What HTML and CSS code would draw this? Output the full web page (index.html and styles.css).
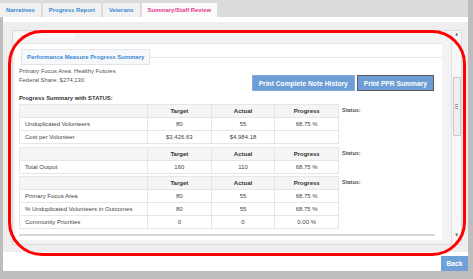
FILE: index.html
```html
<!DOCTYPE html>
<html lang="en">
<head>
  <meta charset="UTF-8">
  <meta name="viewport" content="width=device-width, initial-scale=1.0">
  <title>Summary/Staff Review</title>
  <link rel="stylesheet" href="styles.css">
</head>
<body>
  <div class="frame">
    <div class="tabs">
      <a class="tab" href="#">Narratives</a>
      <a class="tab" href="#">Progress Report</a>
      <a class="tab" href="#">Veterans</a>
      <a class="tab active" href="#">Summary/Staff Review</a>
    </div>

    <div class="panel">
      <div class="scroller">
        <div class="pane">
          <div class="toolbar"></div>
          <div class="sheet">
            <fieldset class="summary">
              <legend>Performance Measure Progress Summary</legend>
              <div class="intro">
                <div class="facts">
                  <div>Primary Focus Area: Healthy Futures</div>
                  <div>Federal Share: $274,130</div>
                </div>
                <div class="actions">
                  <button class="print-btn">Print Complete Note History</button>
                  <button class="print-btn focused">Print PPR Summary</button>
                </div>
              </div>
              <div class="caption">Progress Summary with STATUS:</div>

              <div class="group">
                <table class="grid">
                  <tr><th class="name"></th><th>Target</th><th>Actual</th><th>Progress</th></tr>
                  <tr><td class="name">Unduplicated Volunteers</td><td>80</td><td>55</td><td>68.75 %</td></tr>
                  <tr><td class="name">Cost per Volunteer</td><td>$3,426.63</td><td>$4,984.18</td><td></td></tr>
                </table>
                <span class="status">Status:</span>
              </div>

              <div class="group">
                <table class="grid">
                  <tr><th class="name"></th><th>Target</th><th>Actual</th><th>Progress</th></tr>
                  <tr><td class="name">Total Output</td><td>160</td><td>110</td><td>68.75 %</td></tr>
                </table>
                <span class="status">Status:</span>
              </div>

              <div class="group">
                <table class="grid">
                  <tr><th class="name"></th><th>Target</th><th>Actual</th><th>Progress</th></tr>
                  <tr><td class="name">Primary Focus Area</td><td>80</td><td>55</td><td>68.75 %</td></tr>
                  <tr><td class="name">% Unduplicated Volunteers in Outcomes</td><td>80</td><td>55</td><td>68.75 %</td></tr>
                  <tr><td class="name">Community Priorities</td><td>0</td><td>0</td><td>0.00 %</td></tr>
                </table>
                <span class="status">Status:</span>
              </div>
            </fieldset>
            <div class="hscroll"></div>
          </div>
        </div>
        <div class="vscroll">
          <span class="arrow">&#9650;</span>
          <div class="thumb"><span class="grip"></span></div>
          <span class="arrow down">&#9660;</span>
        </div>
      </div>
    </div>

    <div class="footer">
      <button class="back-btn">Back</button>
    </div>

    <div class="highlight"></div>
  </div>
</body>
</html>
```

FILE: styles.css
```css
* {
  box-sizing: border-box;
}
body {
  margin: 0;
  font-family: "Liberation Sans", Arial, sans-serif;
  background-color: #ffffff;
}
.frame {
  position: relative;
  width: 473px;
  height: 279px;
  border-style: solid;
  border-color: #bdbdbd;
  border-width: 0 5px 8px 3px;
  background-color: #ffffff;
  display: flex;
  flex-direction: column;
}
.tabs {
  height: 17px;
  margin-left: -3px;
  padding-top: 3px;
  background-color: #dbdbdb;
  display: flex;
  gap: 2px;
}
.tab {
  height: 14px;
  line-height: 14px;
  padding: 0 6px;
  background-color: #f1f1f1;
  color: #3688d5;
  font-size: 5.9px;
  font-weight: bold;
  text-decoration: none;
}
.tab.active {
  background-color: #fbfbfb;
  color: #e8358b;
}
.panel {
  margin-top: 5px;
  height: 230px;
  background-color: #eeeeee;
  padding: 8px 6px 7px 9px;
}
.scroller {
  height: 100%;
  display: flex;
  border: 1px solid #dadada;
  background-color: #f3f3f3;
}
.pane {
  flex: 1;
  padding: 1px 9px 4px 2px;
  display: flex;
  flex-direction: column;
}
.toolbar {
  height: 5px;
  margin: 1px 0 5px;
  width: 60px;
  background-color: #fbfbfb;
}
.sheet {
  flex: 1;
  background-color: #ffffff;
  border-top: 1px solid #e2e2e2;
  padding: 5px 0 0 4px;
  overflow: hidden;
}
.summary {
  margin: 0;
  padding: 0;
  border: none;
  border-top: 1px solid #e6e6e6;
  color: #555;
  font-size: 5.9px;
}
.summary legend {
  margin-left: 2px;
  padding: 0 5px;
  height: 16px;
  line-height: 14px;
  border: 1px solid #e1e5ea;
  background-color: #f6f8fa;
  color: #3688d5;
  font-weight: bold;
}
.intro {
  margin-top: 2px;
  padding-right: 8px;
  display: flex;
  justify-content: space-between;
  align-items: flex-start;
}
.facts {
  line-height: 9px;
}
.actions {
  margin-top: 8px;
  display: flex;
  gap: 2px;
}
.print-btn {
  height: 16px;
  padding: 0 6px;
  border: 1px solid #86aedb;
  background-color: #6c9ed5;
  color: #ffffff;
  font-family: "Liberation Sans", Arial, sans-serif;
  font-size: 6.7px;
  font-weight: bold;
}
.print-btn.focused {
  border-color: #5a5a5a;
}
.caption {
  margin-top: 3px;
  line-height: 9px;
  color: #333;
  font-weight: bold;
}
.group {
  margin-top: 1px;
  display: flex;
  align-items: flex-start;
}
.group + .group {
  margin-top: 2.5px;
}
.grid {
  width: 320px;
  table-layout: fixed;
  border-collapse: collapse;
  font-size: 6px;
  color: #444;
}
.grid th,
.grid td {
  height: 13px;
  padding: 0;
  border: 1px solid #e6e6e6;
  text-align: center;
}
.grid th {
  background-color: #f5f5f5;
  color: #333;
}
.grid .name {
  width: 128px;
  padding-left: 5px;
  text-align: left;
}
.status {
  margin: 3px 0 0 3px;
  color: #555;
  font-size: 5.5px;
  font-weight: bold;
}
.hscroll {
  height: 2px;
  margin: 5px 7px 0 0;
  background-color: #d6d6d6;
}
.vscroll {
  width: 10px;
  display: flex;
  flex-direction: column;
  align-items: center;
  border-left: 1px solid #e0e0e0;
  background-color: #f7f7f7;
}
.arrow {
  height: 6px;
  line-height: 6px;
  font-family: "DejaVu Sans", sans-serif;
  font-size: 3.5px;
  color: #555;
}
.arrow.down {
  margin-top: auto;
  margin-bottom: 6px;
}
.thumb {
  width: 8px;
  height: 59px;
  margin-top: 40px;
  border: 1px solid #c9c9c9;
  border-radius: 1px;
  background-color: #efefef;
  display: flex;
  justify-content: center;
  align-items: center;
}
.grip {
  width: 3px;
  height: 5px;
  background: repeating-linear-gradient(#999 0 1px, transparent 1px 2px);
}
.footer {
  flex: 1;
  padding-top: 4px;
  display: flex;
  justify-content: flex-end;
  align-items: flex-start;
}
.back-btn {
  width: 27px;
  height: 15px;
  padding: 0;
  border: none;
  background-color: #6fa0d7;
  color: #ffffff;
  font-family: "Liberation Sans", Arial, sans-serif;
  font-size: 6.7px;
  font-weight: bold;
}
.highlight {
  position: absolute;
  left: 5px;
  top: 30px;
  width: 458px;
  height: 226px;
  border: 3px solid #ff0000;
  border-radius: 34px;
  pointer-events: none;
}
```
